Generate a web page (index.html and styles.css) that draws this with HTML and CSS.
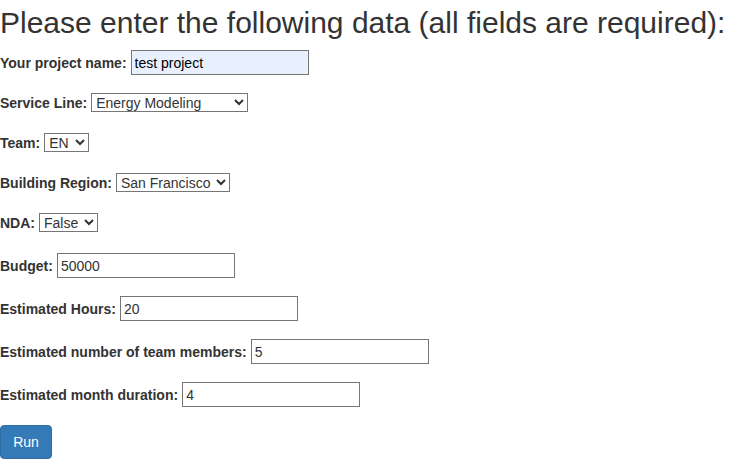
FILE: index.html
```html
<!DOCTYPE html>
<html lang="en">
<head>
<meta charset="utf-8">
<title>Project data</title>
<link rel="stylesheet" href="styles.css">
</head>
<body>
<h2 class="title">Please enter the following data (all fields are required):</h2>
<form class="form">
  <div class="row row-input first">
    <label class="lbl" for="pname">Your project name:</label>
    <input class="field autofill" id="pname" type="text" value="test project">
  </div>
  <div class="row row-select">
    <label class="lbl" for="sline">Service Line:</label>
    <select class="pick w-service" id="sline"><option>Energy Modeling</option></select>
  </div>
  <div class="row row-select">
    <label class="lbl" for="team">Team:</label>
    <select class="pick w-team" id="team"><option>EN</option></select>
  </div>
  <div class="row row-select">
    <label class="lbl" for="region">Building Region:</label>
    <select class="pick w-region" id="region"><option>San Francisco</option></select>
  </div>
  <div class="row row-select">
    <label class="lbl" for="nda">NDA:</label>
    <select class="pick w-nda" id="nda"><option>False</option></select>
  </div>
  <div class="row row-input">
    <label class="lbl" for="budget">Budget:</label>
    <input class="field" id="budget" type="text" value="50000">
  </div>
  <div class="row row-input">
    <label class="lbl" for="hours">Estimated Hours:</label>
    <input class="field" id="hours" type="text" value="20">
  </div>
  <div class="row row-input">
    <label class="lbl" for="members">Estimated number of team members:</label>
    <input class="field" id="members" type="text" value="5">
  </div>
  <div class="row row-input">
    <label class="lbl" for="months">Estimated month duration:</label>
    <input class="field" id="months" type="text" value="4">
  </div>
  <div class="row row-button">
    <button class="btn-run" type="button">Run</button>
  </div>
</form>
</body>
</html>
```
FILE: styles.css
```css
html, body {
  margin: 0;
  padding: 0;
  background: #fff;
}
body {
  font-family: "Liberation Sans", Arial, Helvetica, sans-serif;
  font-size: 14px;
  line-height: 20px;
  color: #333;
}
.title {
  margin: 0;
  padding-top: 6px;
  font-size: 30px;
  line-height: 33px;
  font-weight: 400;
  color: #333;
}
.form {
  display: flex;
  flex-direction: column;
  margin: 0;
}
.row {
  display: flex;
  align-items: center;
  gap: 4px;
}
.row-input {
  height: 25px;
  margin-top: 18px;
}
.row-input.first {
  margin-top: 11px;
}
.row-select {
  height: 19px;
  margin-top: 21px;
}
.row-input + .row-select {
  margin-top: 18px;
}
.row-select + .row-input {
  margin-top: 21px;
}
.row-button {
  margin-top: 18px;
}
.lbl {
  font-weight: 700;
  white-space: nowrap;
}
.field {
  box-sizing: border-box;
  width: 178px;
  height: 25px;
  margin: 0;
  padding: 1px 3px;
  border: 1px solid #767676;
  border-radius: 0;
  font-family: inherit;
  font-size: 14px;
  color: #333;
  background: #fff;
  outline: none;
}
.autofill {
  background: #e8f0fe;
  color: #000;
}
.pick {
  box-sizing: border-box;
  height: 19px;
  margin: 0;
  font-family: inherit;
  font-size: 14px;
  line-height: 17px;
  color: #333;
  background: #fff;
  border: 1px solid #767676;
  border-radius: 0;
  padding: 0;
}
.w-service { width: 157px; }
.w-team { width: 45px; }
.w-region { width: 114px; }
.w-nda { width: 59px; }
.btn-run {
  box-sizing: border-box;
  height: 34px;
  width: 52px;
  padding: 6px 12px;
  font-family: inherit;
  font-size: 14px;
  line-height: 20px;
  color: #fff;
  background: #337ab7;
  border: 1px solid #2e6da4;
  border-radius: 4px;
  cursor: pointer;
}
```
